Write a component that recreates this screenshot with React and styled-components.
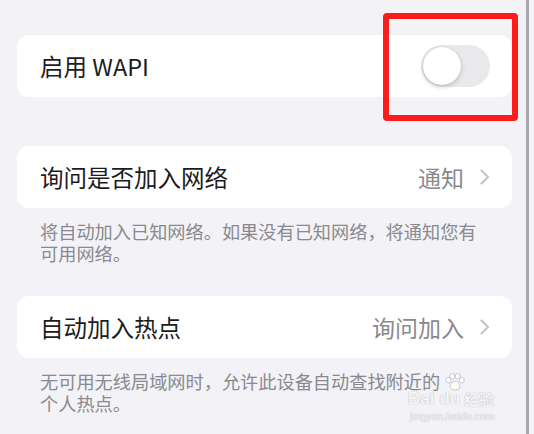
import React from "react";
import styled, { createGlobalStyle } from "styled-components";

const Global = createGlobalStyle`
  html, body { margin: 0; padding: 0; }
  body {
    background: #f2f2f7;
    font-family: "Noto Sans CJK SC", "Noto Sans", sans-serif;
    -webkit-font-smoothing: antialiased;
  }
`;

const Screen = styled.div`
  position: relative;
  display: flex;
  width: 534px;
  height: 434px;
  overflow: hidden;
  background: #f2f2f7;
`;

const Main = styled.div`
  flex: 1;
  display: flex;
  flex-direction: column;
  padding: 35px 14px 0 17px;
`;

const Divider = styled.div`
  width: 3px;
  background: #a9a9ad;
`;

const Strip = styled.div`
  width: 5px;
  background: #f4f4f6;
`;

const Card = styled.div`
  display: flex;
  align-items: center;
  height: 62px;
  padding: 0 22px 0 23px;
  background: #ffffff;
  border-radius: 12px;
  margin-top: ${(p) => p.$top || 0}px;
`;

const Title = styled.div`
  flex: 1;
  font-size: 23.5px;
  color: #1c1c1e;
`;

const Value = styled.div`
  font-size: 23px;
  color: #8a8a8e;
  margin-right: 16px;
`;

const Toggle = styled.div`
  position: relative;
  width: 69px;
  height: 42px;
  border-radius: 21px;
  background: #e9e9eb;
`;

const Knob = styled.div`
  position: absolute;
  left: 2px;
  top: 2px;
  width: 38px;
  height: 38px;
  border-radius: 50%;
  background: #ffffff;
  box-shadow: 0 2px 5px rgba(0, 0, 0, 0.18), 0 0 1px rgba(0, 0, 0, 0.2);
`;

const Footer = styled.div`
  padding: 12px 16px 0 23px;
  font-size: 18.2px;
  line-height: 22px;
  color: #8a8a8e;
`;

const Line = styled.div`
  white-space: nowrap;
`;

const Highlight = styled.div`
  position: absolute;
  left: 383px;
  top: 13px;
  width: 135px;
  height: 108px;
  box-sizing: border-box;
  border: 6px solid #fc1c1c;
  border-radius: 4px;
`;

const Watermark = styled.div`
  position: absolute;
  left: 408px;
  top: 373px;
  width: 100px;
  display: flex;
  flex-direction: column;
  align-items: flex-start;
  color: rgba(255, 255, 255, 0.92);
  font-family: "Liberation Sans", sans-serif;
  pointer-events: none;
`;

const PawWrap = styled.div`
  margin-left: 36px;
  height: 18px;
`;

const MarkRow = styled.div`
  display: flex;
  align-items: center;
  height: 15px;
  font-size: 17px;
  font-weight: 700;
  text-shadow: 0 0 1px rgba(130, 130, 135, 0.8);
`;

const MarkDu = styled.span`
  margin-left: 5px;
`;

const MarkCn = styled.span`
  font-family: "Noto Sans CJK SC", sans-serif;
  font-size: 15px;
  font-weight: 700;
  margin-left: 4px;
`;

const MarkUrl = styled.div`
  font-size: 10.5px;
  margin-top: 4px;
  margin-left: 2px;
  text-shadow: 0 0 1px rgba(130, 130, 135, 0.8);
`;

const Chevron = () => (
  <svg width="10" height="16" viewBox="0 0 10 16" fill="none">
    <path d="M1.5 1.5 L8 8 L1.5 14.5" stroke="#c4c4c7" strokeWidth="2.2" strokeLinecap="round" strokeLinejoin="round" />
  </svg>
);

const Paw = () => (
  <svg width="22" height="18" viewBox="0 0 24 20">
    <g fill="rgba(255,255,255,0.92)" stroke="rgba(130,130,135,0.55)" strokeWidth="0.8">
      <ellipse cx="4.5" cy="8" rx="2.8" ry="3.2" />
      <ellipse cx="9" cy="3.5" rx="2.8" ry="3.2" />
      <ellipse cx="15" cy="3.5" rx="2.8" ry="3.2" />
      <ellipse cx="19.5" cy="8" rx="2.8" ry="3.2" />
      <path d="M12 9 C7 9 5 16 8 18 C10 19 14 19 16 18 C19 16 17 9 12 9 Z" />
    </g>
  </svg>
);

export default function App() {
  return (
    <>
      <Global />
      <Screen>
        <Main>
          <Card>
            <Title>启用 WAPI</Title>
            <Toggle>
              <Knob />
            </Toggle>
          </Card>

          <Card $top={49}>
            <Title>询问是否加入网络</Title>
            <Value>通知</Value>
            <Chevron />
          </Card>
          <Footer>
            <Line>将自动加入已知网络。如果没有已知网络，将通知您有</Line>
            <Line>可用网络。</Line>
          </Footer>

          <Card $top={32}>
            <Title>自动加入热点</Title>
            <Value>询问加入</Value>
            <Chevron />
          </Card>
          <Footer>
            <Line>无可用无线局域网时，允许此设备自动查找附近的</Line>
            <Line>个人热点。</Line>
          </Footer>
        </Main>
        <Divider />
        <Strip />
        <Highlight />
        <Watermark>
          <PawWrap>
            <Paw />
          </PawWrap>
          <MarkRow>
            <span>Bai</span>
            <MarkDu>du</MarkDu>
            <MarkCn>经验</MarkCn>
          </MarkRow>
          <MarkUrl>jingyan.baidu.com</MarkUrl>
        </Watermark>
      </Screen>
    </>
  );
}
